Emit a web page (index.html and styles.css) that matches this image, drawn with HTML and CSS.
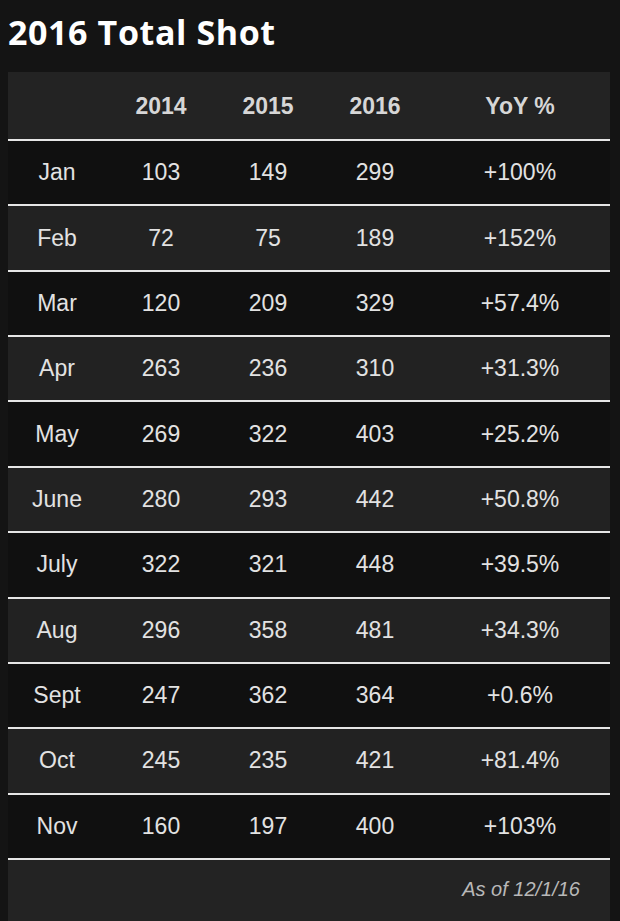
FILE: index.html
```html
<!DOCTYPE html>
<html>
<head>
<meta charset="utf-8">
<link rel="stylesheet" href="styles.css">
</head>
<body>
<h1 class="title">2016 Total Shot</h1>
<div class="table">
  <div class="row head">
    <div class="cell"></div>
    <div class="cell">2014</div>
    <div class="cell">2015</div>
    <div class="cell">2016</div>
    <div class="cell">YoY %</div>
  </div>
  <div class="row dark"><div class="cell">Jan</div><div class="cell">103</div><div class="cell">149</div><div class="cell">299</div><div class="cell">+100%</div></div>
  <div class="row light"><div class="cell">Feb</div><div class="cell">72</div><div class="cell">75</div><div class="cell">189</div><div class="cell">+152%</div></div>
  <div class="row dark"><div class="cell">Mar</div><div class="cell">120</div><div class="cell">209</div><div class="cell">329</div><div class="cell">+57.4%</div></div>
  <div class="row light"><div class="cell">Apr</div><div class="cell">263</div><div class="cell">236</div><div class="cell">310</div><div class="cell">+31.3%</div></div>
  <div class="row dark"><div class="cell">May</div><div class="cell">269</div><div class="cell">322</div><div class="cell">403</div><div class="cell">+25.2%</div></div>
  <div class="row light"><div class="cell">June</div><div class="cell">280</div><div class="cell">293</div><div class="cell">442</div><div class="cell">+50.8%</div></div>
  <div class="row dark"><div class="cell">July</div><div class="cell">322</div><div class="cell">321</div><div class="cell">448</div><div class="cell">+39.5%</div></div>
  <div class="row light"><div class="cell">Aug</div><div class="cell">296</div><div class="cell">358</div><div class="cell">481</div><div class="cell">+34.3%</div></div>
  <div class="row dark"><div class="cell">Sept</div><div class="cell">247</div><div class="cell">362</div><div class="cell">364</div><div class="cell">+0.6%</div></div>
  <div class="row light"><div class="cell">Oct</div><div class="cell">245</div><div class="cell">235</div><div class="cell">421</div><div class="cell">+81.4%</div></div>
  <div class="row dark"><div class="cell">Nov</div><div class="cell">160</div><div class="cell">197</div><div class="cell">400</div><div class="cell">+103%</div></div>
  <div class="footer">As of 12/1/16</div>
</div>
</body>
</html>
```

FILE: styles.css
```css
html, body {
  margin: 0;
  padding: 0;
  background: #141414;
}
body {
  padding: 0 10px 0 8px;
  height: 921px;
  overflow: hidden;
}
.title {
  margin: 0;
  padding-top: 12px;
  height: 72px;
  box-sizing: border-box;
  font-family: "Open Sans", sans-serif;
  font-weight: 700;
  font-size: 34px;
  line-height: 40px;
  color: #ffffff;
  letter-spacing: 0.6px;
}
.table {
  background: #232323;
  font-family: "Liberation Sans", Arial, sans-serif;
  color: #e2e2e2;
}
.row {
  display: grid;
  grid-template-columns: 98px 110px 104px 110px 1fr;
  align-items: center;
  height: 65.36px;
  box-sizing: border-box;
  border-bottom: 2px solid #e6e6e6;
  font-size: 23px;
}
.row.head {
  height: 69px;
  background: #232323;
  font-weight: 700;
  color: #d6d6d6;
  padding-top: 2px;
}
.row.dark {
  background: #101010;
}
.row.light {
  background: #222222;
}
.cell {
  text-align: center;
}
.footer {
  height: 61px;
  box-sizing: border-box;
  padding: 18px 30px 0 0;
  text-align: right;
  font-style: italic;
  font-size: 20px;
  color: #b8b8b8;
}
```
